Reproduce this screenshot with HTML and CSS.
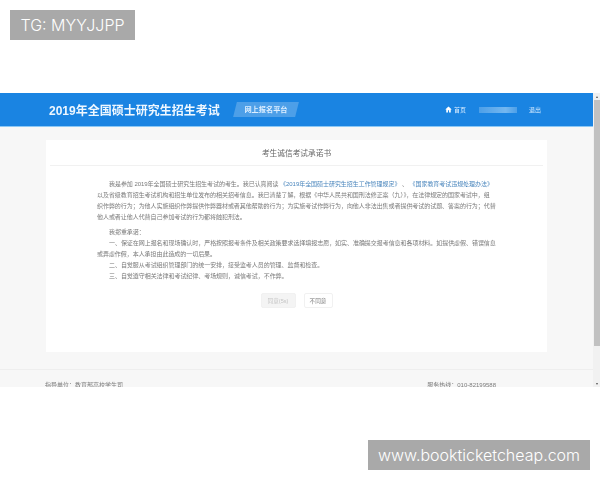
FILE: index.html
```html
<!DOCTYPE html>
<html lang="zh">
<head>
<meta charset="utf-8">
<title>考生诚信考试承诺书</title>
<link rel="stylesheet" href="styles.css">
</head>
<body>
<div class="tag tag-top">TG: MYYJJPP</div>
<main class="shot">
  <div class="app">
    <header class="topbar">
      <h1 class="brand">2019年全国硕士研究生招生考试</h1>
      <span class="badge"><span class="badge-text">网上报名平台</span></span>
      <nav class="nav">
        <svg class="home" viewBox="0 0 10 10"><path d="M5 .6 .4 5h1.4v4.4h2.4V6.2h1.6v3.2h2.4V5h1.4z"/></svg>
        <span class="nav-link">首页</span>
        <span class="nav-user"></span>
        <span class="nav-link">退出</span>
      </nav>
    </header>
    <section class="card">
      <h2 class="card-title">考生诚信考试承诺书</h2>
      <div class="letter">
        <p class="indent">我是参加 2019年全国硕士研究生招生考试的考生。我已认真阅读 <a class="ref">《2019年全国硕士研究生招生工作管理规定》</a> 、 <a class="ref">《国家教育考试违规处理办法》</a><br>以及省级教育招生考试机构和招生单位发布的相关招考信息。我已清楚了解，根据《中华人民共和国刑法修正案（九）》，在法律规定的国家考试中，组<br>织作弊的行为；为他人实施组织作弊提供作弊器材或者其他帮助的行为；为实施考试作弊行为，向他人非法出售或者提供考试的试题、答案的行为；代替<br>他人或者让他人代替自己参加考试的行为都将触犯刑法。</p>
        <p class="indent gap">我郑重承诺：</p>
        <p class="indent">一、保证在网上报名和现场确认时，严格按照报考条件及相关政策要求选择填报志愿，如实、准确提交报考信息和各项材料。如提供虚假、错误信息<br>或弄虚作假，本人承担由此造成的一切后果。</p>
        <p class="indent">二、自觉服从考试组织管理部门的统一安排，接受监考人员的管理、监督和检查。</p>
        <p class="indent">三、自觉遵守相关法律和考试纪律、考场规则，诚信考试，不作弊。</p>
      </div>
      <div class="actions">
        <button class="btn btn-off">同意(5s)</button>
        <button class="btn">不同意</button>
      </div>
    </section>
    <footer class="foot">
      <span>指导单位：教育部高校学生司</span>
      <span>服务热线：010-82199588</span>
    </footer>
  </div>
  <div class="scroll">
    <span class="arrow">▴</span>
    <span class="thumb"></span>
    <span class="arrow">▾</span>
  </div>
</main>
<div class="tag tag-bottom">www.bookticketcheap.com</div>
</body>
</html>
```
FILE: styles.css
```css
* { box-sizing: border-box; }
html, body { margin: 0; padding: 0; }
body {
  position: relative;
  width: 600px;
  height: 480px;
  overflow: hidden;
  padding-top: 93px;
  background: #fff;
  font-family: "Liberation Sans", "Noto Sans CJK SC", sans-serif;
}
.tag {
  position: absolute;
  height: 30px;
  line-height: 30px;
  background: #a9a9a9;
  color: #fff;
  font-family: Inter, "Liberation Sans", sans-serif;
  font-weight: 300;
  text-align: center;
}
.tag-top { left: 10px; top: 10px; width: 125px; font-size: 16px; }
.tag-bottom { left: 368px; top: 440px; width: 222px; font-size: 16px; }
.shot {
  display: flex;
  height: 294px;
  overflow: hidden;
  filter: blur(0.5px);
}
.app {
  flex: 1;
  min-width: 0;
  background: #f7f7f7;
}
.topbar {
  display: flex;
  align-items: center;
  height: 34px;
  padding: 0 52px 0 49px;
  background: #1a84e2;
  border-bottom: 1px solid #8cc8f5;
  color: #fff;
}
.brand {
  margin: 0;
  font-size: 12px;
  font-weight: 700;
  color: #eef7ff;
  white-space: nowrap;
}
.badge {
  display: block;
  margin-left: 15px;
  width: 62px;
  height: 15px;
  background: #4d9fe8;
  transform: skewX(-14deg);
  text-align: center;
}
.badge-text {
  display: block;
  transform: skewX(14deg);
  font-size: 7.2px;
  font-weight: 700;
  line-height: 15px;
  color: #dceeff;
}
.nav {
  display: flex;
  align-items: center;
  margin-left: auto;
  font-size: 6px;
  color: #d8ecff;
}
.home { width: 7px; height: 7px; fill: #fff; margin-right: 2px; }
.nav-user {
  width: 38px;
  height: 6px;
  margin: 0 12px 0 13px;
  background: linear-gradient(90deg, #4c9fe8, #74b7f0 70%, #4c9fe8);
}
.card {
  width: 501px;
  height: 212px;
  margin: 13px 0 17px 46px;
  padding: 0 4px;
  background: #fff;
}
.card-title {
  margin: 0;
  height: 26px;
  line-height: 27px;
  border-bottom: 1px solid #f1f1f1;
  font-size: 7.7px;
  font-weight: 400;
  text-align: center;
  color: #666;
}
.letter {
  width: 402px;
  margin: 13px 0 0 47px;
  font-size: 6px;
  line-height: 11px;
  letter-spacing: -0.05px;
  color: #7a7a7a;
}
.letter p { margin: 0; }
.letter .indent { text-indent: 12px; }
.letter .gap { margin-top: 4px; }
.ref { color: #4a86bd; }
.actions {
  display: flex;
  justify-content: center;
  gap: 8px;
  margin-top: 11px;
}
.btn {
  width: 29px;
  height: 15px;
  padding: 0;
  border: 1px solid #f1f1f1;
  border-radius: 2px;
  background: #fff;
  font: 5.6px "Liberation Sans", "Noto Sans CJK SC", sans-serif;
  color: #777;
}
.btn-off { width: 35px; background: #f4f4f4; color: #c4c4c4; }
.foot {
  display: flex;
  justify-content: space-between;
  height: 30px;
  padding: 10px 97px 0 45px;
  border-top: 1px solid #eee;
  font-size: 6px;
  line-height: 10px;
  color: #7d7d7d;
}
.scroll {
  display: flex;
  flex-direction: column;
  align-items: center;
  justify-content: space-between;
  width: 7px;
  background: #f1f1f1;
  font-size: 4px;
  line-height: 7px;
  color: #555;
}
.thumb {
  flex: 1;
  width: 6px;
  margin-bottom: 34px;
  background: #c1c1c1;
}
```
